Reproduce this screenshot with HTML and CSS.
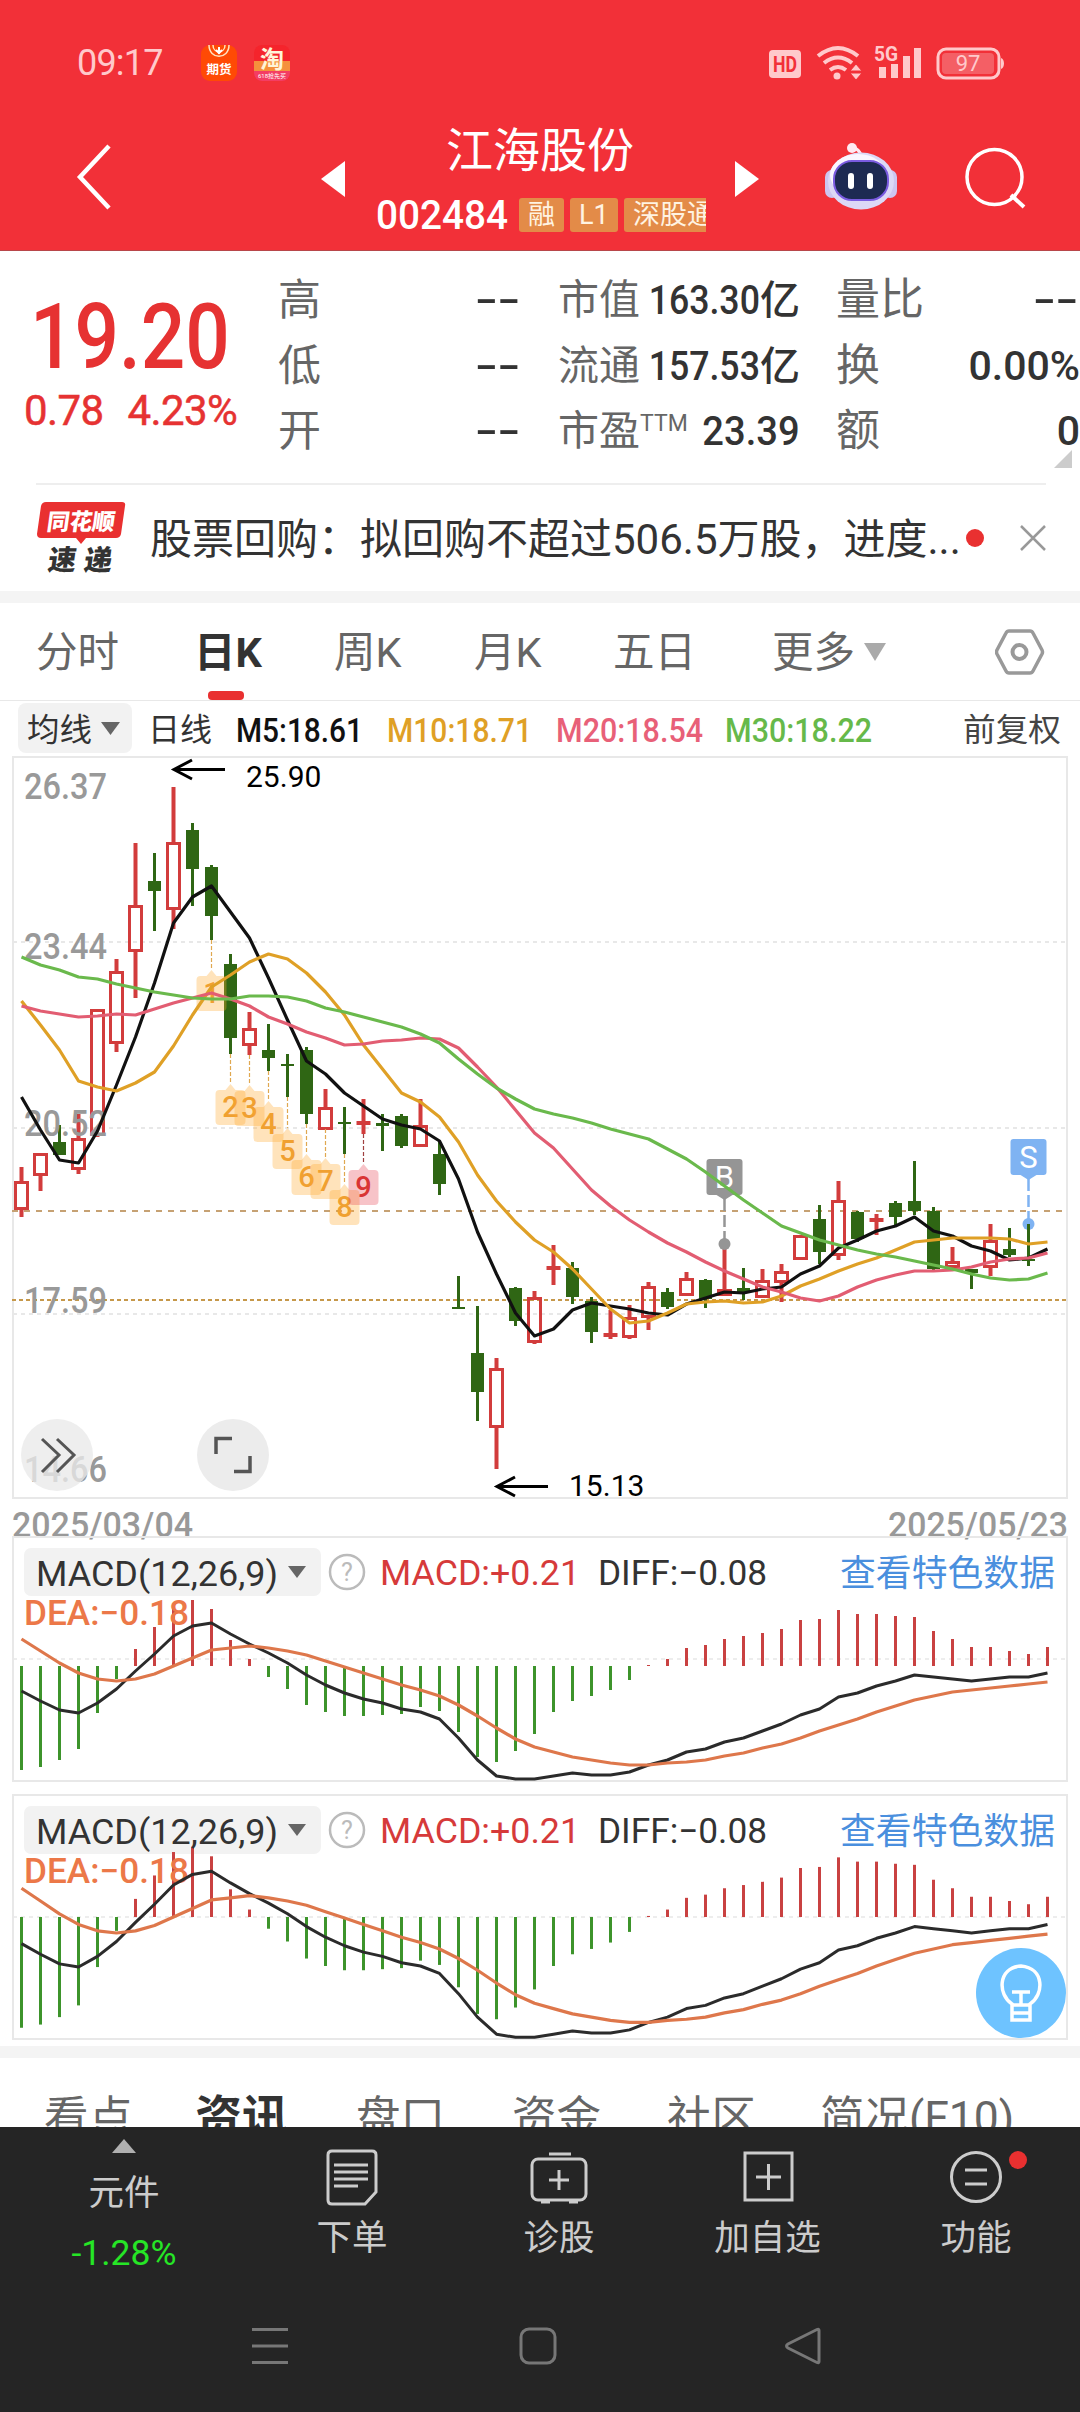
FILE: index.html
```html
<!DOCTYPE html>
<html lang="zh-CN">
<head>
    <meta charset="UTF-8">
    <meta name="viewport" content="width=device-width, initial-scale=1.0">
    <title>江海股份 002484</title>
    <link rel="stylesheet" href="styles.css">
</head>
<body>
<div class="page">

    <header class="header">
        <!-- Status bar -->
        <div class="status">
            <span class="time">09:17</span>
            <svg class="app-icons" width="90" height="36" viewBox="0 0 90 36">
                <rect width="36" height="36" rx="9" fill="#ff4a05"/>
                <path d="M8 0c0 15 20 15 20 0M12 0c0 9 12 9 12 0" fill="none" stroke="#ffe3c0" stroke-width="1.5"/>
                <path d="M18 2v7m-3-4l3 3 3-3" stroke="#fff" stroke-width="2" fill="none"/>
                <text x="18" y="29" font-size="12.5" font-weight="700" text-anchor="middle" fill="#fff">期货</text>
                <rect x="53" width="36" height="36" rx="8" fill="#f5242c"/>
                <path d="M53 16h36v10H53z" fill="#f5903c"/>
                <path d="M53 26h36v2a8 8 0 0 1-8 8H61a8 8 0 0 1-8-8z" fill="#f43d63"/>
                <text x="71" y="23" font-size="24" font-weight="700" text-anchor="middle" fill="#fff4d8">淘</text>
                <text x="71" y="33" font-size="6" text-anchor="middle" fill="#fff">618抢先买</text>
            </svg>
            <svg class="status-icons" width="240" height="40" viewBox="766 42 240 40">
                <rect x="769" y="49" width="32" height="28" rx="4" fill="#ffc9cb"/>
                <text x="785" y="71" font-size="22" font-weight="700" text-anchor="middle" textLength="24" lengthAdjust="spacingAndGlyphs" fill="#f23038">HD</text>
                <g fill="none" stroke="#ffc9cb" stroke-width="4">
                    <path d="M818 55q20-16 40 0M824 62q14-11 28 0M830 69q8-6 16 0"/>
                </g>
                <circle cx="837" cy="75" r="3.5" fill="#ffc9cb"/>
                <path d="M850 70l6-7 6 7zM850 72l6 7 6-7z" fill="#ffc9cb" stroke="#f23038"/>
                <text x="874" y="60" font-size="20" font-weight="700" textLength="24" lengthAdjust="spacingAndGlyphs" fill="#ffc9cb">5G</text>
                <path d="M879 66h7v11h-7zM891 63h7v14h-7zM903 55h7v22h-7zM914 47h7v30h-7z" fill="#ffc9cb"/>
                <rect x="938" y="48" width="61" height="29" rx="8" fill="none" stroke="#ffc9cb" stroke-width="3"/>
                <rect x="942" y="52" width="52" height="21" rx="4" fill="#f45f65"/>
                <path d="M1001 57c4 1 4 10 0 11z" fill="#ffc9cb"/>
                <text x="968" y="70" font-size="22" text-anchor="middle" fill="#ffc9cb">97</text>
            </svg>
        </div>

        <!-- Title -->
        <div class="title-bar">
            <svg class="back" width="40" height="70" viewBox="0 0 40 70"><path d="M34 4L5 35l29 31" fill="none" stroke="#fff" stroke-width="4.5"/></svg>
            <svg class="prev" width="24" height="36" viewBox="0 0 24 36"><path d="M24 0v36L0 18z" fill="#fff"/></svg>
            <div class="stock">
                <div class="stock-name">江海股份</div>
                <div class="stock-code">
                    <span class="code"><span>002484</span></span>
                    <span class="tag">融</span>
                    <span class="tag">L1</span>
                    <span class="tag">深股通</span>
                </div>
            </div>
            <svg class="next" width="24" height="36" viewBox="0 0 24 36"><path d="M0 0v36l24-18z" fill="#fff"/></svg>
            <svg class="robot" width="76" height="72" viewBox="822 140 76 72">
                <path d="M849 147q12 0 13 14" fill="none" stroke="#ffe9f2" stroke-width="3"/>
                <circle cx="852" cy="148" r="5" fill="#ffe9f2"/>
                <rect x="825" y="170" width="14" height="28" rx="7" fill="#cdc5f0"/>
                <rect x="883" y="170" width="14" height="28" rx="7" fill="#cdc5f0"/>
                <ellipse cx="861" cy="181" rx="33" ry="28.5" fill="#dcd8f6"/>
                <ellipse cx="858" cy="175" rx="28" ry="21" fill="#faf6ff"/>
                <rect x="834" y="161" width="54" height="39" rx="18" fill="#1d2a52" stroke="#7a5be0" stroke-width="2"/>
                <path d="M851 176v10M870 176v10" stroke="#fff" stroke-width="6" stroke-linecap="round"/>
            </svg>
            <svg class="search" width="66" height="66" viewBox="961 144 66 66"><circle cx="994.500" cy="177" r="27.500" fill="none" stroke="#fff" stroke-width="3.500"/><path d="M1011 195l13 12" stroke="#fff" stroke-width="4"/></svg>
        </div>
    </header>

    <!-- Quote -->
    <section class="quote">
        <div class="price">
            <div class="price-now"><span>19.20</span></div>
            <div class="price-diff"><span>0.78</span><span>4.23%</span></div>
        </div>
        <dl class="stats">
            <dt>高</dt><dd><span class="dash">--</span></dd>
            <dt>低</dt><dd><span class="dash">--</span></dd>
            <dt>开</dt><dd><span class="dash">--</span></dd>
        </dl>
        <dl class="stats stats-mid">
            <dt>市值</dt><dd><span class="num">163.30</span>亿</dd>
            <dt>流通</dt><dd><span class="num">157.53</span>亿</dd>
            <dt>市盈<sup>TTM</sup></dt><dd><span class="num num-wide">23.39</span></dd>
        </dl>
        <dl class="stats stats-end">
            <dt>量比</dt><dd><span class="dash">--</span></dd>
            <dt>换</dt><dd><span class="num num-wide">0.00%</span></dd>
            <dt>额</dt><dd><span class="num num-wide">0</span></dd>
        </dl>
        <i class="corner"></i>
    </section>

    <!-- News -->
    <section class="news">
        <svg class="news-logo" width="92" height="76" viewBox="36 499 92 76">
            <path d="M46 501h76q4 0 3 4l-4 28q-1 4-5 4H86l-5 6-5-6H41q-4 0-4-4l4-28q1-4 5-4z" fill="#e93030"/>
            <text transform="translate(46 529) skewX(-8)" font-size="23" font-weight="900" textLength="68" lengthAdjust="spacingAndGlyphs" fill="#fff">同花顺</text>
            <text transform="translate(47 569) skewX(-8)" font-size="28" font-weight="900" textLength="64" lengthAdjust="spacing" fill="#333">速递</text>
        </svg>
        <p class="news-text">股票回购：拟回购不超过506.5万股，进度...</p>
        <i class="dot"></i>
        <svg class="close" width="26" height="26" viewBox="0 0 26 26"><path d="M1 1l24 24M25 1L1 25" stroke="#999" stroke-width="2.500"/></svg>
    </section>

    <!-- Period tabs -->
    <nav class="periods">
        <span>分时</span>
        <span class="active">日K</span>
        <span>周K</span>
        <span>月K</span>
        <span>五日</span>
        <span class="more">更多</span>
        <svg width="50" height="48" viewBox="0 0 50 48"><path d="M14 3h21q2 0 3 2l9 17q1 2 0 4l-9 17q-1 2-3 2H14q-2 0-3-2L2 26q-1-2 0-4l9-17q1-2 3-2z" fill="none" stroke="#999" stroke-width="3.500"/><circle cx="24.500" cy="24" r="7" fill="none" stroke="#999" stroke-width="4"/></svg>
    </nav>

    <!-- Charts -->
    <section class="charts">
        <svg id="chart" width="1080" height="1346" viewBox="0 700 1080 1346"></svg>
        <button class="hint">
            <svg width="90" height="90" viewBox="0 0 90 90" fill="none" stroke="#fff" stroke-width="3.500"><path d="M36 62V56C22 47 21 20 45 18c24 2 23 29 9 38v6M36 57h18M36 62v10h18V62M36 65h18M45 44v13M36 44h18"/></svg>
        </button>
    </section>

    <nav class="info-tabs">
        <span>看点</span>
        <span class="active">资讯</span>
        <span>盘口</span>
        <span>资金</span>
        <span>社区</span>
        <span>简况(F10)</span>
    </nav>

    <footer class="bottom">
        <div class="actions">
            <div class="action sector">
                <i class="up"></i>
                <span>元件</span>
                <span class="down">-1.28%</span>
            </div>
            <div class="action">
                <svg width="60" height="60" viewBox="0 0 60 60"><path d="M10 4h40q4 0 4 4v37L43 57H10q-4 0-4-4V8q0-4 4-4zM12 18h34M12 25h34M12 32h34M12 39h24"/></svg>
                <span>下单</span>
            </div>
            <div class="action">
                <svg width="60" height="60" viewBox="0 0 60 60"><path d="M20 7h22"/><rect x="3" y="12" width="54" height="41" rx="6"/><path d="M12 55h9M40 55h9M30 23v20M20 33h20"/></svg>
                <span>诊股</span>
            </div>
            <div class="action">
                <svg width="60" height="60" viewBox="0 0 60 60"><path d="M7 6h47v47H7zM30.500 17v26M18 30h25"/></svg>
                <span>加自选</span>
            </div>
            <div class="action">
                <svg width="60" height="60" viewBox="0 0 60 60"><circle cx="30" cy="30" r="24.500"/><path d="M19 23h22M19 37h22"/></svg>
                <span>功能</span>
                <i class="dot"></i>
            </div>
        </div>
        <div class="system-nav">
            <svg width="40" height="40" viewBox="0 0 40 40"><path d="M2 3.500h36M2 20h36M2 36.500h36"/></svg>
            <svg width="40" height="40" viewBox="0 0 40 40"><rect x="3" y="3" width="34" height="34" rx="8"/></svg>
            <svg width="40" height="40" viewBox="0 0 40 40"><path d="M34 3.500q2-1 2 1v31q0 2-2 1L5 22q-3-2 0-4z"/></svg>
        </div>
    </footer>
</div>
<script src="script.js"></script>
</body>
</html>
```

FILE: styles.css
```css
* {
    box-sizing: border-box;
}

body {
    margin: 0;
    background: #fff;
    font-family: Roboto, "Noto Sans CJK SC", sans-serif;
    color: #333;
}

svg {
    display: block;
    font-family: Roboto, "Noto Sans CJK SC", sans-serif;
}

.page {
    width: 1080px;
    height: 2412px;
    overflow: hidden;
    display: flex;
    flex-direction: column;
}

/* Header */
.header {
    height: 251px;
    flex: none;
    background: #f23038;
    color: #fff;
    border-bottom: 1px solid #b8464a;
}

.status {
    height: 125px;
    display: flex;
    align-items: center;
    padding: 0 74px 0 77px;
}

.time {
    width: 124px;
    font-size: 36px;
    letter-spacing: -0.8px;
    color: #ffc9cb;
}

.status-icons {
    margin-left: auto;
}

.title-bar {
    height: 125px;
    display: flex;
    align-items: flex-start;
}

.back {
    margin: 17px 0 0 75px;
}

.prev {
    margin: 36px 0 0 206px;
}

.stock {
    width: 330px;
    margin-left: 31px;
}

.stock-name {
    width: 328px;
    padding-top: 1px;
    font-size: 47px;
    line-height: 50px;
    text-align: center;
}

.stock-code {
    display: flex;
    align-items: center;
    width: 330px;
    height: 40px;
    margin-top: 19px;
    overflow: hidden;
    gap: 6px;
}

.code {
    flex: none;
    width: 137px;
    font-size: 41px;
    font-weight: 500;
    line-height: 40px;
}

.code span {
    display: inline-block;
    transform: scaleX(0.945);
    transform-origin: left;
}

.tag {
    flex: none;
    height: 34px;
    padding: 0 9px;
    border-radius: 3px;
    background: #e38b48;
    color: #fff3e2;
    font-size: 27px;
    line-height: 35px;
}

.tag:nth-child(3) {
    width: 48px;
}

.next {
    margin: 36px 0 0 29px;
}

.robot {
    margin: 15px 0 0 63px;
}

.search {
    margin: 19px 0 0 63px;
}

/* Quote */
.quote {
    position: relative;
    display: flex;
    flex: none;
    height: 232px;
    padding-top: 17px;
}

.price {
    width: 260px;
    color: #e63232;
}

.price-now {
    height: 105px;
    margin: 17px 0 0 30px;
    font-size: 91px;
    font-weight: 500;
    line-height: 105px;
}

.price-now span {
    display: inline-block;
    transform: scaleX(0.86);
    transform-origin: left;
}

.price-diff {
    display: flex;
    gap: 24px;
    margin-left: 24px;
    font-size: 42px;
    line-height: 42px;
    letter-spacing: -0.6px;
    white-space: nowrap;
    -webkit-text-stroke: 0.5px #e63232;
}

.stats {
    display: grid;
    grid-template-columns: 90px minmax(0, 1fr);
    grid-auto-rows: 65.5px;
    align-items: center;
    width: 242px;
    margin: 0 0 0 18px;
    font-size: 43px;
    line-height: 65px;
    white-space: nowrap;
}

.stats dt {
    color: #666;
}

.stats dd {
    margin: 0;
    text-align: right;
    font-size: 40px;
    font-weight: 500;
}

.stats-mid {
    width: 242px;
    margin-left: 38px;
    font-size: 41px;
}

.stats-end {
    width: 244px;
    margin-left: 36px;
    font-size: 44px;
}

/* narrow figures, kept against the right edge */
.stats .num {
    display: inline-block;
    margin-left: -20px;
    font-size: 41px;
    transform: scaleX(0.87);
    transform-origin: right;
}

.stats .num-wide {
    transform: scaleX(0.93);
}

.stats-end .num-wide {
    transform: none;
}

.dash {
    display: inline-block;
    transform: scaleX(1.65);
    transform-origin: right;
}

.stats-end .dash {
    margin-right: 2px;
}

.stats sup {
    font-size: 23px;
    line-height: 0;
    vertical-align: 14px;
}

.corner {
    position: absolute;
    right: 8px;
    bottom: 15px;
    border-left: 18px solid transparent;
    border-bottom: 18px solid #ccc;
}

.news {
    flex: none;
    display: flex;
    align-items: center;
    height: 108px;
    margin: 0 34px 0 36px;
    border-top: 2px solid #eee;
}

.news-text {
    width: 816px;
    margin: 3px 0 0 22px;
    font-size: 42px;
    line-height: 60px;
    white-space: nowrap;
}

.dot {
    width: 18px;
    height: 18px;
    border-radius: 50%;
    background: #e93030;
}

.close {
    margin-left: 36px;
}

/* Period tabs */
.periods {
    flex: none;
    display: grid;
    grid-template-columns: 161px 137px 140px 139px 159px 223px auto;
    align-items: center;
    height: 109px;
    padding-left: 36px;
    border-top: 12px solid #f4f4f4;
    color: #666;
    font-size: 41.5px;
    line-height: 99px;
}

.periods span {
    height: 97px;
}

.periods .active {
    position: relative;
    left: -3px;
    color: #333;
    font-weight: 700;
}

.periods .active::after {
    content: "";
    position: absolute;
    left: 14px;
    bottom: 0;
    width: 36px;
    height: 9px;
    border-radius: 4px;
    background: #e93030;
}

.more::after {
    content: "";
    display: inline-block;
    margin-left: 9px;
    vertical-align: 6px;
    border: 11px solid transparent;
    border-top: 18px solid #aaa;
    border-bottom: 0;
}

/* Charts */
.charts {
    position: relative;
    flex: none;
    height: 1346px;
}

.hint {
    position: absolute;
    left: 976px;
    top: 1248px;
    width: 90px;
    height: 90px;
    padding: 0;
    border: 0;
    border-radius: 50%;
    background: #6ec3ff;
}

.info-tabs {
    flex: none;
    display: grid;
    grid-template-columns: 151px 161px 156px 155px 153px auto;
    height: 81px;
    overflow: hidden;
    padding: 27px 0 0 44px;
    border-top: 12px solid #f4f4f4;
    color: #666;
    font-size: 44.5px;
    line-height: 66px;
}

.info-tabs .active {
    color: #333;
    font-size: 47px;
    font-weight: 700;
}

/* Bottom bar */
.bottom {
    flex: none;
    height: 285px;
    background: #252525;
    color: #ccc;
}

.actions {
    display: grid;
    grid-template-columns: 248px 208px 206px 211px 206px;
    height: 180px;
}

.action {
    position: relative;
    display: flex;
    flex-direction: column;
    align-items: center;
    padding-top: 20px;
    font-size: 35.5px;
    line-height: 50px;
}

.action svg,
.system-nav svg {
    fill: none;
    stroke: #ccc;
    stroke-width: 3;
}

.action svg + span {
    margin-top: 6px;
}

.action .dot {
    position: absolute;
    left: 136px;
    top: 24px;
}

.sector {
    padding-top: 12px;
}

.up {
    border: 12px solid transparent;
    border-bottom: 14px solid #b0b0b0;
    border-top: 0;
}

.sector span {
    margin-top: 15px;
}

.sector .down {
    margin-top: 10px;
    color: #26e626;
}

.system-nav {
    display: grid;
    grid-template-columns: 268px 265px auto;
    padding: 19px 0 0 250px;
}

.system-nav svg {
    stroke: #777;
}
```

FILE: script.js
```js
// x position of a trading day
function px(i) {
    return 21.5 + 19 * i;
}

var FALL = '#2f6614';
var RISE = '#d23c3c';

// direction, high, body top, body bottom, low
var candles = [
    ['r', 1167, 1182, 1209, 1217], ['r', 1153, 1154, 1175, 1191], ['g', 1125, 1142, 1155, 1155],
    ['r', 1114, 1139, 1169, 1174], ['r', 1010, 1010, 1135, 1137], ['r', 959, 972, 1043, 1052],
    ['r', 843, 906, 951, 998], ['g', 853, 881, 891, 931], ['r', 787, 843, 909, 929],
    ['g', 823, 830, 869, 906], ['g', 865, 867, 916, 940], ['g', 954, 964, 1038, 1054],
    ['r', 1012, 1029, 1045, 1055], ['g', 1024, 1050, 1058, 1071], ['g', 1054, 1064, 1066, 1097],
    ['g', 1047, 1050, 1114, 1124], ['r', 1089, 1108, 1129, 1129], ['g', 1107, 1122, 1124, 1154],
    ['r', 1099, 1123, 1123, 1134], ['g', 1114, 1123, 1126, 1151], ['g', 1114, 1116, 1146, 1148],
    ['r', 1099, 1126, 1146, 1147], ['g', 1141, 1154, 1184, 1195], ['g', 1276, 1307, 1309, 1309],
    ['g', 1306, 1353, 1392, 1421], ['r', 1358, 1369, 1427, 1469], ['g', 1287, 1288, 1321, 1326],
    ['r', 1291, 1298, 1342, 1344], ['r', 1245, 1268, 1268, 1285], ['g', 1262, 1268, 1297, 1304],
    ['g', 1297, 1301, 1332, 1343], ['r', 1310, 1335, 1335, 1339], ['r', 1305, 1318, 1337, 1339],
    ['r', 1282, 1287, 1317, 1330], ['g', 1288, 1292, 1307, 1309], ['r', 1272, 1279, 1295, 1295],
    ['g', 1279, 1280, 1299, 1308], ['r', 1245, 1290, 1295, 1296], ['g', 1268, 1288, 1292, 1300],
    ['r', 1269, 1281, 1297, 1297], ['r', 1264, 1272, 1282, 1302], ['r', 1236, 1236, 1259, 1259],
    ['g', 1205, 1219, 1252, 1264], ['r', 1181, 1201, 1255, 1260], ['g', 1211, 1212, 1239, 1242],
    ['r', 1214, 1220, 1220, 1235], ['g', 1201, 1203, 1217, 1225], ['g', 1161, 1201, 1211, 1215],
    ['g', 1207, 1211, 1269, 1270], ['r', 1247, 1262, 1267, 1268], ['g', 1269, 1269, 1273, 1289],
    ['r', 1224, 1241, 1267, 1276], ['g', 1228, 1249, 1255, 1257], ['g', 1224, 1259, 1261, 1266]
];

var averages = [
    ['#111', [1097, 1130, 1160, 1163, 1131, 1085, 1037, 983, 923, 897, 886, 912, 938, 978, 1020, 1061, 1074, 1093, 1106, 1119, 1125, 1129, 1141, 1179, 1232, 1274, 1313, 1336, 1329, 1310, 1303, 1306, 1309, 1313, 1315, 1304, 1298, 1292, 1293, 1289, 1287, 1274, 1266, 1248, 1240, 1231, 1226, 1217, 1231, 1236, 1246, 1251, 1260, 1258, 1249]],
    ['#dfa026', [1001, 1025, 1050, 1081, 1087, 1091, 1083, 1072, 1046, 1015, 987, 975, 962, 954, 959, 973, 992, 1015, 1045, 1069, 1093, 1102, 1117, 1142, 1175, 1201, 1222, 1240, 1252, 1269, 1289, 1309, 1323, 1321, 1313, 1304, 1302, 1301, 1303, 1302, 1296, 1286, 1279, 1271, 1264, 1258, 1250, 1242, 1240, 1238, 1238, 1238, 1239, 1244, 1242]],
    ['#e25d72', [1006, 1011, 1014, 1017, 1016, 1014, 1015, 1009, 1003, 998, 993, 999, 1006, 1017, 1024, 1032, 1038, 1045, 1044, 1041, 1040, 1038, 1039, 1048, 1067, 1087, 1110, 1133, 1148, 1169, 1190, 1206, 1220, 1232, 1243, 1252, 1262, 1271, 1279, 1287, 1292, 1298, 1301, 1296, 1287, 1280, 1275, 1271, 1271, 1270, 1267, 1262, 1259, 1258, 1253]],
    ['#6ab94c', [957, 965, 970, 977, 979, 984, 988, 992, 995, 998, 999, 999, 996, 996, 997, 1001, 1008, 1012, 1017, 1022, 1027, 1034, 1043, 1059, 1074, 1088, 1099, 1109, 1114, 1118, 1123, 1129, 1134, 1139, 1149, 1159, 1172, 1186, 1200, 1213, 1226, 1233, 1240, 1245, 1250, 1254, 1257, 1261, 1265, 1269, 1274, 1278, 1280, 1279, 1273]]
];

// MACD values, in pixels above the zero line
var macd = [-104, -101, -94, -83, -47, -13, 17, 39, 61, 66, 57, 26, 7, -11, -23, -39, -46, -50, -50, -49, -48, -41, -45, -66, -91, -96, -85, -68, -46, -35, -30, -24, -14, 1, 7, 18, 21, 27, 30, 33, 37, 46, 47, 56, 52, 52, 50, 49, 35, 27, 19, 19, 15, 12, 19];
var diff = [-25, -35, -44, -47, -37, -23, -5, 12, 30, 40, 43, 32, 22, 13, 3, -9, -19, -27, -33, -37, -43, -46, -53, -72, -94, -110, -113, -113, -110, -107, -109, -109, -106, -99, -94, -86, -83, -76, -72, -65, -58, -49, -43, -31, -27, -20, -15, -9, -11, -13, -15, -13, -11, -11, -7];
var dea = [27, 15, 3, -7, -13, -15, -13, -8, 0, 8, 16, 18, 20, 18, 15, 11, 5, -1, -7, -13, -19, -24, -30, -39, -50, -62, -73, -81, -86, -91, -94, -97, -99, -99, -97, -96, -94, -90, -87, -82, -78, -72, -65, -59, -53, -46, -40, -34, -30, -26, -24, -22, -20, -18, -16];

function rect(x, y, w, h, attrs) {
    return '<rect x="' + x + '" y="' + y + '" width="' + w + '" height="' + h + '" ' + (attrs || '') + '/>';
}

function path(d, color, width, attrs) {
    return '<path d="' + d + '" fill="none" stroke="' + color + '" stroke-width="' + width + '" ' + (attrs || '') + '/>';
}

// text squeezed or stretched to the given width
function label(str, x, y, width, size, color, weight) {
    return '<text x="' + x + '" y="' + y + '" font-size="' + size + '" fill="' + color + '" font-weight="' + (weight || 400) +
        '" textLength="' + width + '" lengthAdjust="spacingAndGlyphs">' + str + '</text>';
}

function line(ys, color, width) {
    return path('M' + ys.map(function (y, i) { return px(i) + ' ' + y; }).join('L'), color, width, 'stroke-linejoin="round"');
}

function drawLegend() {
    return rect(0, 699, 1080, 2, 'fill="#e8e8e8"') +
        rect(18, 703, 114, 50, 'rx="8" fill="#f2f2f2"') +
        label('均线', 27, 741, 65, 32, '#333') +
        '<path d="M101 722h19l-9.500 13z" fill="#666"/>' +
        label('日线', 148, 741, 64, 32, '#333') +
        label('M5:18.61', 236, 742, 127, 33, '#111', 500) +
        label('M10:18.71', 387, 742, 145, 33, '#dfa026', 500) +
        label('M20:18.54', 556, 742, 147, 33, '#e86078', 500) +
        label('M30:18.22', 725, 742, 147, 33, '#66b94a', 500) +
        label('前复权', 963, 741, 98, 32, '#444');
}

function drawCandle(c, i) {
    var x = px(i);
    if (c[0] === 'g') {
        return rect(x - 1.5, c[1], 3, c[4] - c[1], 'fill="' + FALL + '"') +
            rect(x - 6.5, c[2], 13, Math.max(c[3] - c[2], 2), 'fill="' + FALL + '"');
    }
    var s = path('M' + x + ' ' + c[1] + 'V' + c[2] + 'M' + x + ' ' + c[3] + 'V' + c[4], RISE, 4);
    if (c[2] === c[3]) {
        return s + path('M' + (x - 7) + ' ' + c[2] + 'h14', RISE, 4);
    }
    return s + rect(x - 6, c[2] + 0.5, 12, c[3] - c[2] - 1, 'fill="none" stroke="' + RISE + '" stroke-width="3"');
}

function drawPrice() {
    var s = rect(13, 757, 1054, 741, 'fill="none" stroke="#e8e8e8" stroke-width="2"');
    [942, 1128, 1314].forEach(function (y) {
        s += path('M13 ' + y + 'H1066', '#e8e8e8', 2, 'stroke-dasharray="4 4"');
    });
    s += path('M12 1211H1066', '#c6a173', 2, 'stroke-dasharray="6 6"');
    s += path('M12 1300H1066', '#c6984a', 2, 'stroke-dasharray="4 3"');

    s += candles.map(drawCandle).join('');

    [['26.37', 799], ['23.44', 959], ['20.52', 1136], ['17.59', 1313], ['14.66', 1482]].forEach(function (l) {
        s += label(l[0], 24, l[1], 83, 36, '#999', 500);
    });

    // numbered markers
    [970, 1084, 1085, 1101, 1128, 1154, 1158, 1184, 1164].forEach(function (y, n) {
        var x = px(n + 10);
        var last = n === 8;
        s += path('M' + x + ' ' + candles[n + 10][4] + 'V' + y, last ? '#a04040' : '#e0a850', 1.2, 'stroke-dasharray="4 2"');
        s += '<path d="M' + x + ' ' + y + 'l5 6h6q4 0 4 4v27q0 4-4 4h-22q-4 0-4-4v-27q0-4 4-4h6z" fill="' + (last ? '#e84858' : '#ffa930') + '" fill-opacity=".33"/>';
        s += '<text x="' + x + '" y="' + (y + 33) + '" font-size="29" font-weight="500" text-anchor="middle" fill="' + (last ? '#d93434' : '#f0a030') + '">' + (n + 1) + '</text>';
    });

    // buy and sell markers
    [['B', 37, 1159, 1244, '#959595'], ['S', 53, 1139, 1224, '#7fb3f2']].forEach(function (m) {
        var x = px(m[1]);
        s += path('M' + x + ' ' + (m[2] + 40) + 'V' + m[3], m[4], 2.5, 'stroke-dasharray="12 4"');
        s += rect(x - 18, m[2], 36, 36, 'rx="3" fill="' + m[4] + '"');
        s += '<path d="M' + (x - 8) + ' ' + (m[2] + 36) + 'h16l-8 5z" fill="' + m[4] + '"/>';
        s += '<circle cx="' + x + '" cy="' + m[3] + '" r="6" fill="' + m[4] + '"/>';
        s += '<text x="' + x + '" y="' + (m[2] + 29) + '" font-size="31" text-anchor="middle" fill="#fff">' + m[0] + '</text>';
    });
    // the sell day's candle stays above its marker
    s += path('M' + px(53) + ' 1224V1266', FALL, 3);

    averages.forEach(function (a) {
        s += line(a[1], a[0], 3.2);
    });

    // high and low
    s += path('M225 769.500H175M192 760L174 769.500l18 9.500', '#000', 3);
    s += '<text x="246" y="787" font-size="30" fill="#000">25.90</text>';
    s += path('M548 1486.500H498M515 1477L497 1486.500l18 9.500', '#000', 3);
    s += '<text x="569" y="1496" font-size="30" fill="#000">15.13</text>';

    // tools
    s += '<circle cx="57" cy="1455" r="36" fill="#e9e9e9" fill-opacity=".78"/><circle cx="233" cy="1455" r="36" fill="#ececec"/>';
    s += path('M42 1439l17 16-17 17M57 1439l17 16-17 17', '#555', 3);
    s += path('M216 1454v-15.500h16M234 1471.500h16V1456', '#555', 3.5);

    s += label('2025/03/04', 12, 1537, 181, 35, '#999', 500);
    s += label('2025/05/23', 888, 1537, 180, 35, '#999', 500);
    return s;
}

function drawMacd(top, zero, scale, grid) {
    function y(v) {
        return zero - v * scale;
    }
    var s = rect(13, top, 1054, 244, 'fill="none" stroke="#e8e8e8" stroke-width="2"');
    s += path('M13 ' + grid + 'H1066', '#e8e8e8', 1.5, 'stroke-dasharray="4 4"');
    s += rect(24, top + 11, 297, 48, 'rx="7" fill="#f2f2f2"');
    macd.forEach(function (v, i) {
        s += path('M' + px(i) + ' ' + zero + 'V' + y(v), v < 0 ? '#3d942b' : '#c94141', 3);
    });
    s += label('MACD(12,26,9)', 36, top + 49, 242, 35, '#333');
    s += '<path d="M288 ' + (top + 29) + 'h18l-9 12z" fill="#666"/>';
    s += '<circle cx="347" cy="' + (top + 35) + '" r="17" fill="none" stroke="#bbb" stroke-width="2.500"/>';
    s += '<text x="347" y="' + (top + 44) + '" font-size="25" text-anchor="middle" fill="#bbb">?</text>';
    s += label('MACD:+0.21', 380, top + 48, 200, 35, '#d63a3a');
    s += label('DIFF:−0.08', 598, top + 48, 169, 35, '#333');
    s += label('查看特色数据', 840, top + 49, 215, 36, '#4a8fde');
    s += label('DEA:−0.18', 24, top + 88, 165, 35, '#ec7848', 500);
    s += line(diff.map(y), '#2b2b2b', 3);
    s += line(dea.map(y), '#de774b', 3.2);
    return s;
}

document.getElementById('chart').innerHTML = drawLegend() + drawPrice() +
    drawMacd(1537, 1666, 1, 1659) + drawMacd(1795, 1917, 1.065, 1917);
```
